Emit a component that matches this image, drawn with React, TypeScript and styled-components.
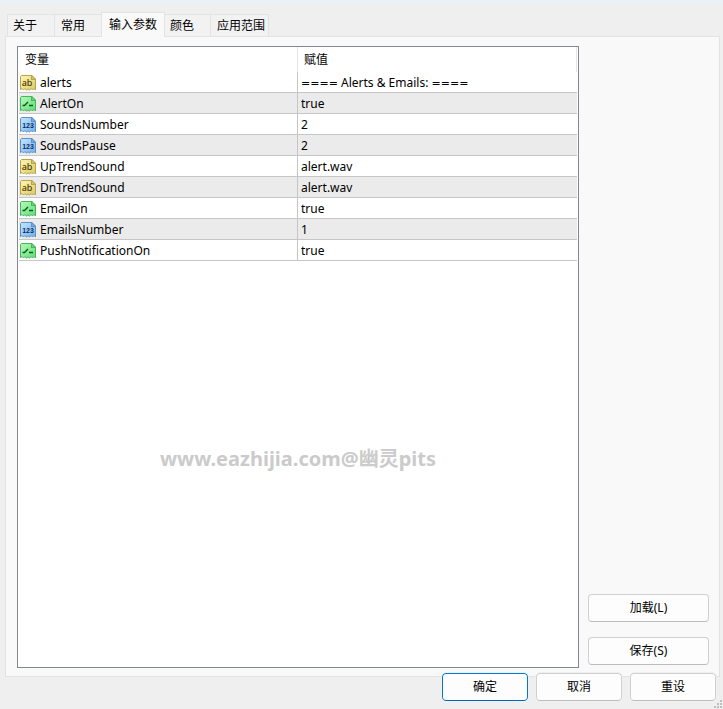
import React, { useState } from 'react';
import styled, { createGlobalStyle } from 'styled-components';

type Kind = 'text' | 'bool' | 'int';

interface Param {
  name: string;
  value: string;
  kind: Kind;
}

const params: Param[] = [
  { name: 'alerts', value: '==== Alerts & Emails: ====', kind: 'text' },
  { name: 'AlertOn', value: 'true', kind: 'bool' },
  { name: 'SoundsNumber', value: '2', kind: 'int' },
  { name: 'SoundsPause', value: '2', kind: 'int' },
  { name: 'UpTrendSound', value: 'alert.wav', kind: 'text' },
  { name: 'DnTrendSound', value: 'alert.wav', kind: 'text' },
  { name: 'EmailOn', value: 'true', kind: 'bool' },
  { name: 'EmailsNumber', value: '1', kind: 'int' },
  { name: 'PushNotificationOn', value: 'true', kind: 'bool' },
];

const tabs = [
  { label: '关于', width: 48 },
  { label: '常用', width: 46 },
  { label: '输入参数', width: 64 },
  { label: '颜色', width: 46 },
  { label: '应用范围', width: 58 },
];

const GlobalStyle = createGlobalStyle`
  *, *::before, *::after { box-sizing: border-box; }
  body {
    margin: 0;
    background: #efefef;
    color: #000;
    font: 12px/16px "Noto Sans", "Noto Sans CJK SC", sans-serif;
  }
  button { font: inherit; color: inherit; }
`;

const Dialog = styled.main`
  display: flex;
  flex-direction: column;
  min-height: 100vh;
  padding: 9px 3px 8px 5px;
  border-top: 3px solid #e8f3f8;
`;

const TabBar = styled.div`
  display: flex;
  align-items: flex-end;
  padding-left: 2px;
`;

const Tab = styled.button<{ $active: boolean; $width: number }>`
  flex: none;
  width: ${(p) => p.$width}px;
  height: ${(p) => (p.$active ? 25 : 22)}px;
  margin-bottom: ${(p) => (p.$active ? -1 : 0)}px;
  padding: ${(p) => (p.$active ? '0 0 1px 7px' : '0 0 0 5px')};
  border: 1px solid #e3e3e3;
  border-bottom: 0;
  border-left-width: ${(p) => (p.$active ? 1 : 0)}px;
  background: ${(p) => (p.$active ? '#f9f9f9' : '#f2f2f2')};
  text-align: left;
  white-space: nowrap;
  position: relative;

  &:first-child { border-left-width: 1px; }
  &:nth-child(2), &:last-child { padding-left: 6px; }
  &:nth-child(2) { border-right: 0; }
`;

const Panel = styled.section`
  display: flex;
  flex: 1;
  gap: 9px;
  padding: 9px 10px 8px 11px;
  border: 1px solid #e3e3e3;
  background: #f9f9f9;
`;

const ListBox = styled.div`
  position: relative;
  flex: 1;
  min-width: 0;
  padding: 0 1px;
  border: 1px solid #828790;
  background: #fff;
`;

const ParamTable = styled.table`
  width: 100%;
  table-layout: fixed;
  border-collapse: separate;
  border-spacing: 0;
`;

const HeadCell = styled.th`
  height: 25px;
  padding: 0 6px;
  border-right: 1px solid #e5e5e5;
  font-weight: 400;
  text-align: left;
`;

const Row = styled.tr`
  &:nth-child(even) { background: #ebebeb; }
`;

const Cell = styled.td`
  height: 21px;
  padding: 2px 3px 0;
  border-bottom: 1px solid #c6c6c6;

  &:first-child {
    padding: 2px 1px 0;
    border-right: 1px solid #c6c6c6;
  }
`;

const NameBox = styled.div`
  display: flex;
  align-items: center;
  gap: 4px;
`;

const Equals = styled.span`
  font-family: "DejaVu Sans", sans-serif;
  font-size: 11px;
  line-height: 1;
`;

const Watermark = styled.div`
  position: absolute;
  top: 66%;
  left: 0;
  right: 0;
  color: #cbcbcb;
  font-size: 20px;
  font-weight: 700;
  line-height: 28px;
  margin-top: -11px;
  text-align: center;
  pointer-events: none;
`;

const SideBar = styled.div`
  display: flex;
  flex: 0 0 121px;
  flex-direction: column;
  justify-content: flex-end;
  gap: 15px;
  padding-bottom: 3px;
`;

const PushButton = styled.button<{ $primary?: boolean }>`
  height: 28px;
  padding: 0;
  border: 1px solid ${(p) => (p.$primary ? '#0078d4' : '#d0d0d0')};
  border-bottom-color: ${(p) => (p.$primary ? '#0067c0' : '#bcbcbc')};
  border-radius: 4px;
  background: #fdfdfd;
`;

const Footer = styled.footer`
  display: flex;
  justify-content: flex-end;
  gap: 8px;
  margin-top: -4px;
  padding-right: 4px;

  ${PushButton} {
    width: 86px;
    outline: 1px solid #f0f0f0;
  }
`;

const Grip = styled.svg`
  position: fixed;
  right: 0;
  bottom: 0;
`;

const palette: Record<Kind, { light: string; dark: string; edge: string; ink: string }> = {
  text: { light: '#f8efa6', dark: '#dcc860', edge: '#b8a44c', ink: '#4a3c08' },
  bool: { light: '#a6f3ac', dark: '#60dc74', edge: '#48b45c', ink: '#075c1c' },
  int: { light: '#b5dcfb', dark: '#74aee6', edge: '#5c92c8', ink: '#0b2f66' },
};

function TypeIcon({ kind }: { kind: Kind }) {
  const c = palette[kind];
  const id = `fill-${kind}`;
  return (
    <svg width="16" height="16" viewBox="0 0 16 16" aria-hidden="true">
      <defs>
        <linearGradient id={id} x1="0" y1="0" x2="1" y2="1">
          <stop offset="0.2" stopColor={c.light} />
          <stop offset="1" stopColor={c.dark} />
        </linearGradient>
      </defs>
      <path
        d="M1.5.5H11.5L15.5 4.5V15L14 13.5L12.5 15L11 13.5L9.5 15.2L8 13.8L6.5 15.2L5 13.5L3.5 15L2 13.5L.5 14.5V1.5Z"
        fill={`url(#${id})`}
        stroke={c.edge}
      />
      <path d="M11 0V5H16V4L12 0Z" fill={c.edge} />
      <path d="M12 1.5V4H14.5Z" fill={c.dark} />
      {kind === 'bool' && (
        <path d="M2.5 9.5H4.5L8 6M9 9.5H13" fill="none" stroke={c.ink} strokeWidth="1.4" />
      )}
      {kind === 'text' && (
        <text x="7" y="11" textAnchor="middle" fontFamily="Noto Sans, sans-serif" fontSize="9" fontWeight="500" fill={c.ink}>
          ab
        </text>
      )}
      {kind === 'int' && (
        <text x="8" y="11" textAnchor="middle" fontFamily="Liberation Sans, sans-serif" fontSize="7" fontWeight="700" fill={c.ink}>
          123
        </text>
      )}
    </svg>
  );
}

function ParamValue({ value }: { value: string }) {
  return (
    <>
      {value.split(/(=+)/).map((part, i) =>
        part.startsWith('=') ? <Equals key={i}>{part}</Equals> : part,
      )}
    </>
  );
}

export default function App() {
  const [active, setActive] = useState(2);
  return (
    <>
      <GlobalStyle />
      <Dialog>
        <TabBar role="tablist">
          {tabs.map((tab, i) => (
            <Tab
              key={tab.label}
              role="tab"
              aria-selected={i === active}
              $active={i === active}
              $width={tab.width}
              onClick={() => setActive(i)}
            >
              {tab.label}
            </Tab>
          ))}
        </TabBar>
        <Panel role="tabpanel">
          <ListBox>
            <ParamTable>
              <thead>
                <tr>
                  <HeadCell scope="col">变量</HeadCell>
                  <HeadCell scope="col">赋值</HeadCell>
                </tr>
              </thead>
              <tbody>
                {params.map((p) => (
                  <Row key={p.name}>
                    <Cell>
                      <NameBox>
                        <TypeIcon kind={p.kind} />
                        {p.name}
                      </NameBox>
                    </Cell>
                    <Cell>
                      <ParamValue value={p.value} />
                    </Cell>
                  </Row>
                ))}
              </tbody>
            </ParamTable>
            <Watermark>www.eazhijia.com@幽灵pits</Watermark>
          </ListBox>
          <SideBar>
            <PushButton>加载(L)</PushButton>
            <PushButton>保存(S)</PushButton>
          </SideBar>
        </Panel>
        <Footer>
          <PushButton $primary>确定</PushButton>
          <PushButton>取消</PushButton>
          <PushButton>重设</PushButton>
        </Footer>
      </Dialog>
      <Grip width="9" height="9" viewBox="0 0 9 9" aria-hidden="true">
        <path d="M6 0h2v2H6zM3 3h2v2H3zM6 3h2v2H6zM0 6h2v2H0zM3 6h2v2H3zM6 6h2v2H6z" fill="#bfbfbf" />
      </Grip>
    </>
  );
}
